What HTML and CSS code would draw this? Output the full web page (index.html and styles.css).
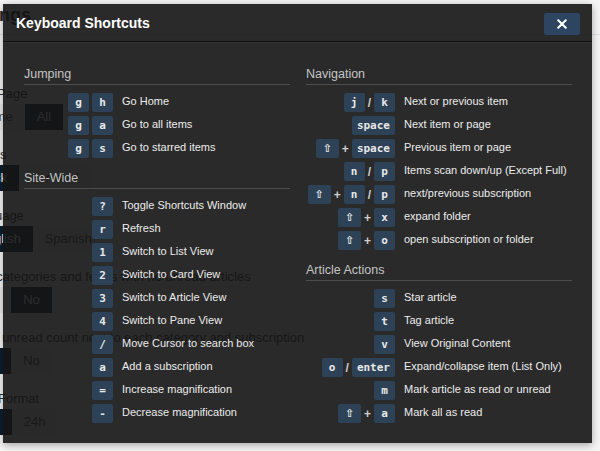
FILE: index.html
```html
<!DOCTYPE html>
<html lang="en">
<head>
    <meta charset="UTF-8">
    <meta name="viewport" content="width=device-width, initial-scale=1.0">
    <title>Settings</title>
    <link rel="stylesheet" href="styles.css">
</head>
<body>
    <div class="page">
        <div class="page-header">
            <h1 class="page-title">Settings</h1>
        </div>
        <div class="settings">
            <div class="setting">
                <div class="setting-label">Start Page</div>
                <div class="btn-group"><span class="btn">Home</span><span class="btn active">All</span></div>
            </div>
            <div class="setting">
                <div class="setting-label">Arrows</div>
                <div class="btn-group"><span class="btn active">Back</span><span class="btn">Forward</span></div>
            </div>
            <div class="setting">
                <div class="setting-label">Language</div>
                <div class="btn-group"><span class="btn active">English</span><span class="btn">Spanish</span></div>
            </div>
            <div class="setting">
                <div class="setting-label">Hide categories and feeds with no unread articles</div>
                <div class="btn-group"><span class="btn">Yes</span><span class="btn active">No</span></div>
            </div>
            <div class="setting">
                <div class="setting-label">Show unread count next to each category and subscription</div>
                <div class="btn-group"><span class="btn active">Yes</span><span class="btn">No</span></div>
            </div>
            <div class="setting">
                <div class="setting-label">Time Format</div>
                <div class="btn-group"><span class="btn active">12h</span><span class="btn">24h</span></div>
            </div>
        </div>
    </div>

    <div class="modal">
        <div class="modal-header">
            <h2>Keyboard Shortcuts</h2>
            <button class="close-btn" type="button">
                <svg width="10" height="10" viewBox="0 0 10 10"><path d="M1.2 1.2 L8.8 8.8 M8.8 1.2 L1.2 8.8" stroke="#fff" stroke-width="2" stroke-linecap="round"/></svg>
            </button>
        </div>
        <div class="modal-body">
            <div class="column">
                <div class="section">
                    <h3>Jumping</h3>
                    <div class="shortcuts">
                        <div class="keys"><kbd>g</kbd><kbd>h</kbd></div><div class="desc">Go Home</div>
                        <div class="keys"><kbd>g</kbd><kbd>a</kbd></div><div class="desc">Go to all items</div>
                        <div class="keys"><kbd>g</kbd><kbd>s</kbd></div><div class="desc">Go to starred items</div>
                    </div>
                </div>
                <div class="section">
                    <h3>Site-Wide</h3>
                    <div class="shortcuts">
                        <div class="keys"><kbd>?</kbd></div><div class="desc">Toggle Shortcuts Window</div>
                        <div class="keys"><kbd>r</kbd></div><div class="desc">Refresh</div>
                        <div class="keys"><kbd>1</kbd></div><div class="desc">Switch to List View</div>
                        <div class="keys"><kbd>2</kbd></div><div class="desc">Switch to Card View</div>
                        <div class="keys"><kbd>3</kbd></div><div class="desc">Switch to Article View</div>
                        <div class="keys"><kbd>4</kbd></div><div class="desc">Switch to Pane View</div>
                        <div class="keys"><kbd>/</kbd></div><div class="desc">Move Cursor to search box</div>
                        <div class="keys"><kbd>a</kbd></div><div class="desc">Add a subscription</div>
                        <div class="keys"><kbd>=</kbd></div><div class="desc">Increase magnification</div>
                        <div class="keys"><kbd>-</kbd></div><div class="desc">Decrease magnification</div>
                    </div>
                </div>
            </div>
            <div class="column">
                <div class="section">
                    <h3>Navigation</h3>
                    <div class="shortcuts">
                        <div class="keys"><kbd>j</kbd><span class="sep">/</span><kbd>k</kbd></div><div class="desc">Next or previous item</div>
                        <div class="keys"><kbd>space</kbd></div><div class="desc">Next item or page</div>
                        <div class="keys"><kbd class="shift">&#8679;</kbd><span class="sep">+</span><kbd>space</kbd></div><div class="desc">Previous item or page</div>
                        <div class="keys"><kbd>n</kbd><span class="sep">/</span><kbd>p</kbd></div><div class="desc">Items scan down/up (Except Full)</div>
                        <div class="keys"><kbd class="shift">&#8679;</kbd><span class="sep">+</span><kbd>n</kbd><span class="sep">/</span><kbd>p</kbd></div><div class="desc">next/previous subscription</div>
                        <div class="keys"><kbd class="shift">&#8679;</kbd><span class="sep">+</span><kbd>x</kbd></div><div class="desc">expand folder</div>
                        <div class="keys"><kbd class="shift">&#8679;</kbd><span class="sep">+</span><kbd>o</kbd></div><div class="desc">open subscription or folder</div>
                    </div>
                </div>
                <div class="section">
                    <h3>Article Actions</h3>
                    <div class="shortcuts">
                        <div class="keys"><kbd>s</kbd></div><div class="desc">Star article</div>
                        <div class="keys"><kbd>t</kbd></div><div class="desc">Tag article</div>
                        <div class="keys"><kbd>v</kbd></div><div class="desc">View Original Content</div>
                        <div class="keys"><kbd>o</kbd><span class="sep">/</span><kbd>enter</kbd></div><div class="desc">Expand/collapse item (List Only)</div>
                        <div class="keys"><kbd>m</kbd></div><div class="desc">Mark article as read or unread</div>
                        <div class="keys"><kbd class="shift">&#8679;</kbd><span class="sep">+</span><kbd>a</kbd></div><div class="desc">Mark all as read</div>
                    </div>
                </div>
            </div>
        </div>
    </div>
</body>
</html>
```

FILE: styles.css
```css
body {
    margin: 0;
    height: 451px;
    overflow: hidden;
    background: #f6f6f6;
    font-family: "Liberation Sans", Arial, sans-serif;
    color: #333;
}

/* settings page behind the dialog */

.page-header {
    height: 34px;
    border-bottom: 1px solid #e0e0e0;
}

.page-title {
    margin: 0 0 0 -40px;
    padding-top: 4px;
    font-size: 18px;
    line-height: 22px;
    color: #222;
}

.settings {
    margin-left: -34px;
    padding-top: 51px;
}

.setting {
    margin-bottom: 17px;
}

.setting-label {
    font-size: 13px;
    line-height: 16px;
    margin-bottom: 2px;
    white-space: nowrap;
}

.btn-group {
    display: flex;
}

.btn {
    height: 26px;
    line-height: 26px;
    padding: 0 12px;
    font-size: 13px;
    background: #ececec;
    color: #444;
}

.btn.active {
    background: #0c1f33;
    color: #fff;
}

/* keyboard shortcuts dialog */

.modal {
    position: absolute;
    left: 3px;
    top: 4px;
    width: 589px;
    box-sizing: border-box;
    background: rgba(20, 20, 20, 0.9);
    box-shadow: 0 2px 8px rgba(0, 0, 0, 0.35);
    color: #e6e6e6;
}

.modal-header {
    height: 37px;
    display: flex;
    align-items: center;
    justify-content: space-between;
    padding: 0 12px 0 13px;
    border-bottom: 1px solid #111;
    box-shadow: 0 1px 0 #333;
}

.modal-header h2 {
    margin: 0;
    font-size: 14px;
    font-weight: bold;
    color: #fff;
}

.close-btn {
    width: 36px;
    height: 22px;
    margin-top: 2px;
    border: none;
    border-radius: 2px;
    background: #2d4560;
    display: flex;
    align-items: center;
    justify-content: center;
    padding: 0;
}

.modal-body {
    display: grid;
    grid-template-columns: 1fr 1fr;
    column-gap: 16px;
    padding: 24px 20px 20px 21px;
}

.section + .section {
    margin-top: 12px;
}

.section h3 {
    margin: 0 0 8px;
    padding-bottom: 2px;
    font-size: 12.5px;
    line-height: 16px;
    font-weight: normal;
    color: #c4c4c4;
    border-bottom: 1px solid #4d4d4d;
}

.shortcuts {
    display: grid;
    grid-template-columns: 89px 1fr;
    grid-auto-rows: 19px;
    column-gap: 9px;
    row-gap: 4px;
}

.keys {
    display: flex;
    justify-content: flex-end;
    align-items: center;
    gap: 3px;
}

kbd {
    display: block;
    box-sizing: border-box;
    min-width: 21px;
    height: 19px;
    padding: 0 5px;
    border-radius: 2px;
    background: #2d4257;
    color: #e8e8e8;
    font-family: "DejaVu Sans Mono", "Liberation Mono", monospace;
    font-size: 11px;
    font-weight: bold;
    line-height: 19px;
    text-align: center;
}

kbd.shift {
    min-width: 23px;
    font-family: "DejaVu Sans", sans-serif;
    font-weight: bold;
}

.sep {
    font-size: 12px;
    font-weight: bold;
    color: #cfcfcf;
}

.desc {
    font-size: 11px;
    line-height: 16px;
    color: #ececec;
    white-space: nowrap;
}
```
